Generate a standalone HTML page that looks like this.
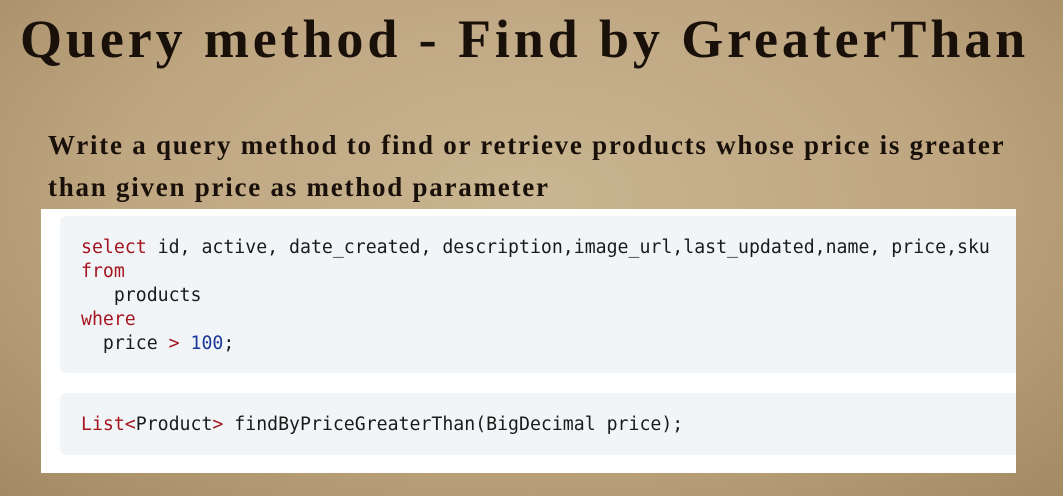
<!DOCTYPE html>
<html><head><meta charset="utf-8"><style>
html,body{margin:0;padding:0}
body{width:1063px;height:496px;overflow:hidden;position:relative;
background:radial-gradient(ellipse at 50% 40%,#c9b591 0%,#bea681 55%,#a38a64 100%);
font-family:"Liberation Serif",serif;color:#1a100a}
.t{position:absolute;left:20px;top:8px;font-size:54px;font-weight:bold;white-space:nowrap;letter-spacing:3.9px}
.s{position:absolute;left:48px;top:124px;font-size:27px;font-weight:bold;line-height:42px;white-space:nowrap;letter-spacing:1.75px}
.box{position:absolute;left:41px;top:209px;width:975px;height:264px;background:#fff}
.c{position:absolute;left:19px;width:956px;background:#f2f5f7;border-radius:6px 0 0 6px;
font-family:"DejaVu Sans Mono","Liberation Mono",monospace;font-size:18.2px;line-height:24px;color:#1a1a1a;white-space:pre}
.c1{top:7px;height:157px}
.c2{top:184px;height:62px}
.in{position:absolute;left:21px}
.k{color:#a31520}.n{color:#1c3a9a}
</style></head><body>
<div class="t">Query method - Find by GreaterThan</div>
<div class="s">Write a query method to find or retrieve products whose price is greater<br>than given price as method parameter</div>
<div class="box">
<div class="c c1"><div class="in" style="top:20px"><span class="k">select</span> id, active, date_created, description,image_url,last_updated,name, price,sku
<span class="k">from</span>
   products
<span class="k">where</span>
  price <span class="k">&gt;</span> <span class="n">100</span>;</div></div>
<div class="c c2"><div class="in" style="top:20px"><span class="k">List&lt;</span>Product<span class="k">&gt;</span> findByPriceGreaterThan(BigDecimal price);</div></div>
</div>
</body></html>
